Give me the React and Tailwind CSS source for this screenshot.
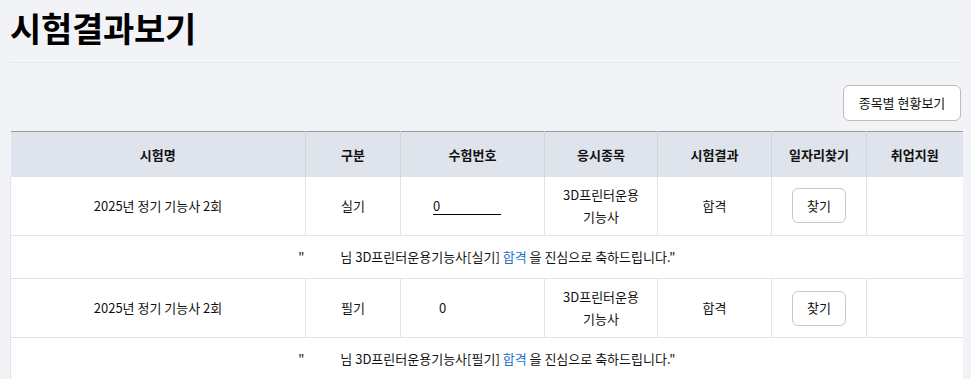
export default function App() {
  const font = { fontFamily: '"Noto Sans CJK KR", "Noto Sans", sans-serif' };
  const rows = [
    { name: "2025년 정기 기능사 2회", type: "실기", underline: true },
    { name: "2025년 정기 기능사 2회", type: "필기", underline: false },
  ];
  return (
    <div className="min-h-[379px] bg-[#f2f3f7] px-[10px] text-[#111]" style={font}>
      <div className="h-[63px] border-b border-[#e6e7eb] pt-[5px]">
        <h1 className="text-[34px] font-bold leading-[46px] tracking-[-0.3px] text-black">시험결과보기</h1>
      </div>
      <div className="flex justify-end pt-[22px] pr-[0px]">
        <button className="h-[36px] w-[118px] rounded-[6px] border border-[#bdbdbd] bg-white text-[13px] text-[#111]">
          종목별 현황보기
        </button>
      </div>
      <table className="mt-[10px] w-[952px] table-fixed border-collapse text-[13px]">
        <colgroup>
          <col className="w-[295px]" />
          <col className="w-[95px]" />
          <col className="w-[144px]" />
          <col className="w-[113px]" />
          <col className="w-[114px]" />
          <col className="w-[95px]" />
          <col className="w-[96px]" />
        </colgroup>
        <thead>
          <tr className="h-[45px] border-t border-[#9a9a9a] bg-[#dfe3eb]">
            {["시험명", "구분", "수험번호", "응시종목", "시험결과", "일자리찾기", "취업지원"].map((h, i) => (
              <th key={i} className={`font-bold ${i > 0 ? "border-l border-[#cfd3da]" : ""}`}>{h}</th>
            ))}
          </tr>
        </thead>
        <tbody>
          {rows.map((r, idx) => (
            <>
              <tr key={"a" + idx} className="h-[59px] border-b border-[#e3e3e3] bg-white text-center">
                <td className="border-l border-[#e3e3e3]">{r.name}</td>
                <td className="border-l border-[#e3e3e3]">{r.type}</td>
                <td className="border-l border-[#e3e3e3] text-left">
                  {r.underline ? (
                    <span className="ml-[32px] inline-block w-[68px] border-b border-black leading-[17px]">0</span>
                  ) : (
                    <span className="ml-[38px] inline-block">0</span>
                  )}
                </td>
                <td className="border-l border-[#e3e3e3] leading-[22px]">
                  3D프린터운용
                  <br />
                  기능사
                </td>
                <td className="border-l border-[#e3e3e3]">합격</td>
                <td className="border-l border-[#e3e3e3]">
                  <button className="h-[35px] w-[54px] rounded-[6px] border border-[#c8c8c8] bg-white text-[13px]">찾기</button>
                </td>
                <td className="border-l border-[#e3e3e3]"></td>
              </tr>
              <tr key={"b" + idx} className="h-[43px] border-b border-[#e3e3e3] bg-white">
                <td colSpan={7} className="border-l border-[#e3e3e3] text-center">
                  "<span className="inline-block w-[36px]"></span>님 3D프린터운용기능사[{r.type}]{" "}
                  <span className="text-[#1a73c8]">합격</span> 을 진심으로 축하드립니다."
                </td>
              </tr>
            </>
          ))}
        </tbody>
      </table>
    </div>
  );
}
